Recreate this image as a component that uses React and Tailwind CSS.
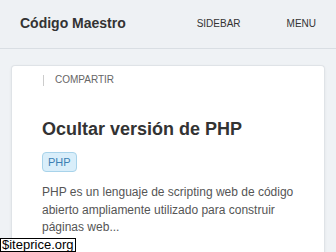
export default function App() {
  return (
    <div className="relative w-[336px] h-[252px] overflow-hidden bg-[#eff2f5]" style={{ fontFamily: '"Liberation Sans", Arial, sans-serif' }}>
      <header className="h-[49px] flex items-center border-b border-[#d9dee3] bg-[#eef1f4] pl-5 pr-5">
        <div className="text-[14px] font-bold text-[#333] leading-none pb-[2px]">Código Maestro</div>
        <nav className="ml-auto flex items-center text-[10px] text-[#333] leading-none">
          <span className="mr-[46px]">SIDEBAR</span>
          <span>MENU</span>
        </nav>
      </header>
      <div className="mx-[11px] mt-4 bg-white rounded-t border border-[#dfe3e7] border-b-0 shadow-[0_1px_3px_rgba(0,0,0,0.06)] h-[200px] pl-[30px] pr-[20px] pt-[7px]">
        <div className="flex items-center h-[14px]">
          <span className="w-px h-[11px] bg-[#ccc] mr-[11px] ml-[1px]"></span>
          <span className="text-[10px] text-[#666] leading-none">COMPARTIR</span>
        </div>
        <h1 className="mt-[30px] text-[18px] font-bold text-[#333] leading-[24px]">Ocultar versión de PHP</h1>
        <div className="mt-[11px] flex">
          <span className="h-[20px] px-[5px] flex items-center rounded-[4px] border border-[#a8d3ea] bg-[#d9eefa] text-[11px] text-[#3b7fb3] leading-none">PHP</span>
        </div>
        <p className="mt-3 text-[12px] leading-[17.5px] text-[#555]">
          PHP es un lenguaje de scripting web de código abierto ampliamente utilizado para construir páginas web...
        </p>
      </div>
      <div className="absolute left-0 bottom-0 h-[14px] px-[1px] bg-white border border-black text-[13px] leading-[12px] text-black" style={{ fontFamily: '"Liberation Sans", Arial, sans-serif' }}>
        $iteprice.org
      </div>
    </div>
  );
}
